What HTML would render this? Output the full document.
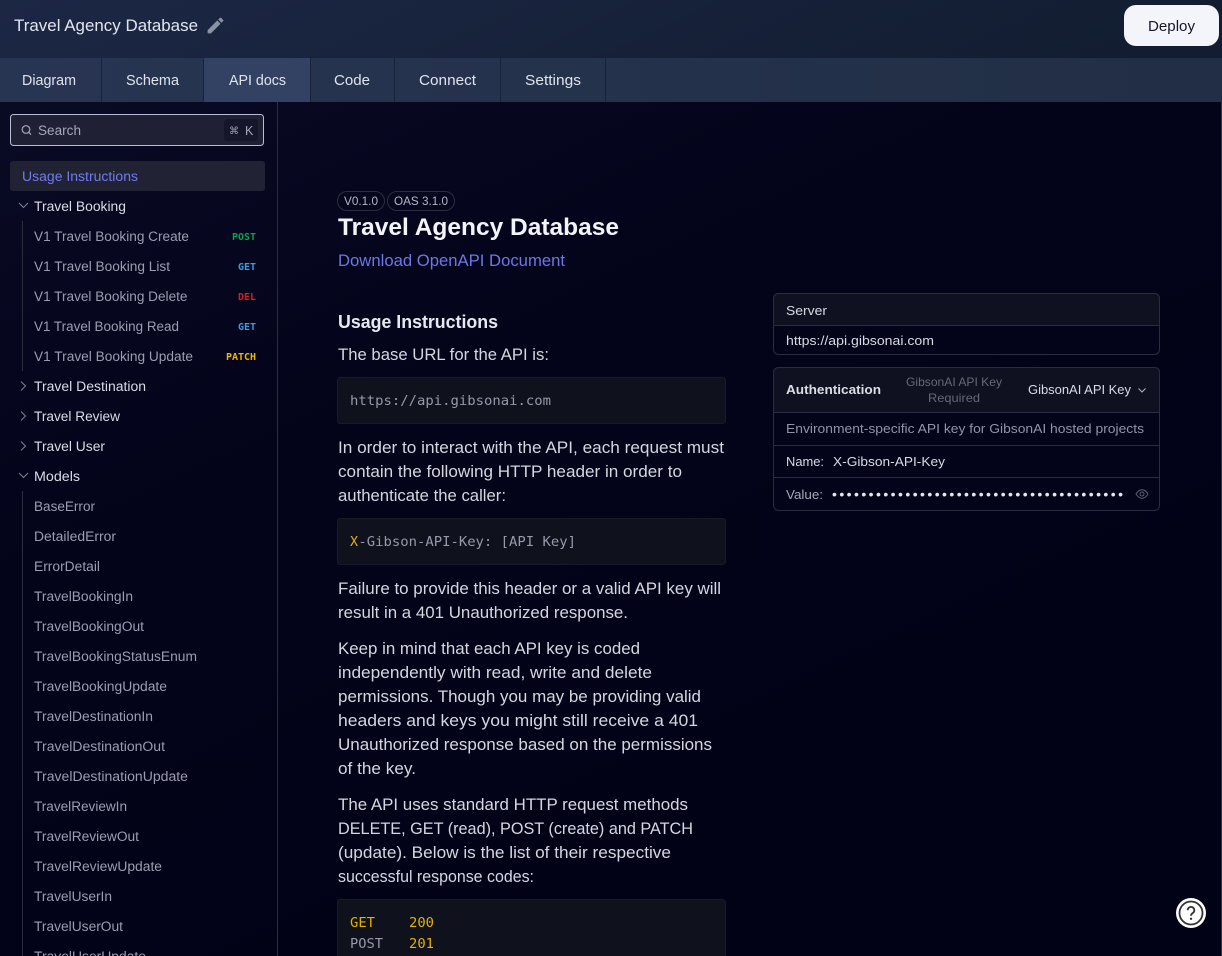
<!DOCTYPE html>
<html lang="en">
<head>
<meta charset="utf-8">
<title>Travel Agency Database</title>
<style>
html,body{margin:0;padding:0;width:1222px;height:956px;overflow:hidden;background:#03031a}
svg{display:block;position:absolute;left:0;top:0}
text{font-family:"Liberation Sans",sans-serif;white-space:pre}
.h{font-size:16.5px;fill:#e3e5ee}
.tab{font-size:14.5px;fill:#e0e3ec}
.s{font-size:13.4px;fill:#9b9eb0}
.g{font-size:13.4px;fill:#dadce6}
.b{font-family:"DejaVu Sans Mono",monospace;font-size:10px;font-weight:700}
.p{font-size:16.4px;fill:#d5d7e0}
.m{font-family:"DejaVu Sans Mono",monospace;font-size:13.4px;fill:#9699ab}
.y{fill:#e6b000}
.c{font-size:12.9px;fill:#d8dae3}
.d{font-size:12.9px;fill:#9294a6}
.pill{font-size:12.3px;fill:#b4b6c4}
</style>
</head>
<body>
<svg width="1222" height="956" viewBox="0 0 1222 956" xmlns="http://www.w3.org/2000/svg">
<defs>
<linearGradient id="hd" x1="0" x2="1" y1="0" y2="0.1"><stop offset="0" stop-color="#1c2745"/><stop offset="1" stop-color="#121d31"/></linearGradient>
<linearGradient id="tb" x1="0" x2="1" y1="0" y2="0"><stop offset="0" stop-color="#283552"/><stop offset="1" stop-color="#212e45"/></linearGradient>
<linearGradient id="bg" x1="0" x2="0.6" y1="0" y2="1"><stop offset="0" stop-color="#0b0c26"/><stop offset="0.45" stop-color="#03031a"/><stop offset="1" stop-color="#020216"/></linearGradient>
</defs>

<rect width="1222" height="956" fill="url(#bg)"/>
<rect width="1222" height="58" fill="url(#hd)"/>
<rect y="58" width="1222" height="44" fill="url(#tb)"/>
<rect x="204" y="58" width="106" height="44" fill="#334262"/>
<g fill="#1a2439">
<rect x="101" y="58" width="1" height="44"/><rect x="203" y="58" width="1" height="44"/><rect x="310" y="58" width="1" height="44"/><rect x="394" y="58" width="1" height="44"/><rect x="500" y="58" width="1" height="44"/><rect x="605" y="58" width="1" height="44"/>
</g>

<text class="h" x="14" y="31" textLength="184" lengthAdjust="spacingAndGlyphs">Travel Agency Database</text>
<svg x="205" y="15" width="21" height="21" viewBox="0 0 24 24"><path fill="#8a93a3" d="M3 17.250V21h3.750L17.810 9.940l-3.750-3.750L3 17.250z M20.710 7.040a1 1 0 0 0 0-1.410l-2.340-2.340a1 1 0 0 0-1.410 0l-1.830 1.830 3.750 3.750z"/></svg>

<rect x="1124" y="5" width="95" height="41" rx="12" fill="#f4f4fb"/>
<text x="1148" y="31" font-size="14.5" fill="#15172a" textLength="47" lengthAdjust="spacingAndGlyphs">Deploy</text>

<text class="tab" x="22" y="85" textLength="54" lengthAdjust="spacingAndGlyphs">Diagram</text>
<text class="tab" x="126" y="85" textLength="53" lengthAdjust="spacingAndGlyphs">Schema</text>
<text class="tab" x="229" y="85" textLength="57" lengthAdjust="spacingAndGlyphs">API docs</text>
<text class="tab" x="334" y="85" textLength="36" lengthAdjust="spacingAndGlyphs">Code</text>
<text class="tab" x="419" y="85" textLength="57" lengthAdjust="spacingAndGlyphs">Connect</text>
<text class="tab" x="525" y="85" textLength="56" lengthAdjust="spacingAndGlyphs">Settings</text>

<!-- sidebar -->
<rect x="277" y="102" width="1" height="854" fill="#2b2d3e"/>
<rect x="10.500" y="114.500" width="253" height="31" rx="3" fill="#1f2034" stroke="#b9bcd8"/>
<rect x="224" y="119" width="34" height="22" rx="3" fill="#15162a"/>
<circle cx="26" cy="129.500" r="3.800" fill="none" stroke="#a5a8ba" stroke-width="1.200"/>
<path d="M28.800 132.300L31 134.600" stroke="#a5a8ba" stroke-width="1.200" fill="none"/>
<text class="s" x="38" y="135" textLength="43" lengthAdjust="spacingAndGlyphs" style="fill:#a5a8ba">Search</text>
<text x="229" y="134" font-size="10" fill="#9b9eb0" style="font-family:'DejaVu Sans',sans-serif">⌘</text>
<text x="245" y="135" font-size="12.500" fill="#a5a8ba">K</text>

<rect x="10" y="161" width="255" height="30" rx="3" fill="#212234"/>
<text x="22" y="181" font-size="13.4" fill="#6f7cf0" textLength="116" lengthAdjust="spacingAndGlyphs">Usage Instructions</text>

<path d="M19 203l4.500 4.500 4.500-4.500" fill="none" stroke="#7f8294" stroke-width="1"/>
<path d="M21 381.500l4.500 4.500-4.500 4.500M21 411.500l4.500 4.500-4.500 4.500M21 441.500l4.500 4.500-4.500 4.500" fill="none" stroke="#7f8294" stroke-width="1"/>
<path d="M19 473l4.500 4.500 4.500-4.500" fill="none" stroke="#7f8294" stroke-width="1"/>
<rect x="22" y="221" width="1" height="150" fill="#2b2d3e"/>
<rect x="22" y="491" width="1" height="465" fill="#2b2d3e"/>

<text class="g" x="34" y="211" textLength="92" lengthAdjust="spacingAndGlyphs">Travel Booking</text>
<text class="s" x="34" y="241" textLength="155" lengthAdjust="spacingAndGlyphs">V1 Travel Booking Create</text>
<text class="s" x="34" y="271" textLength="136" lengthAdjust="spacingAndGlyphs">V1 Travel Booking List</text>
<text class="s" x="34" y="301" textLength="153.500" lengthAdjust="spacingAndGlyphs">V1 Travel Booking Delete</text>
<text class="s" x="34" y="331" textLength="145" lengthAdjust="spacingAndGlyphs">V1 Travel Booking Read</text>
<text class="s" x="34" y="361" textLength="159" lengthAdjust="spacingAndGlyphs">V1 Travel Booking Update</text>
<text class="b" x="232" y="240" fill="#0ba14f" textLength="24" lengthAdjust="spacingAndGlyphs">POST</text>
<text class="b" x="238" y="270" fill="#3d9ddb" textLength="18" lengthAdjust="spacingAndGlyphs">GET</text>
<text class="b" x="238" y="300" fill="#d91c1c" textLength="18" lengthAdjust="spacingAndGlyphs">DEL</text>
<text class="b" x="238" y="330" fill="#3d9ddb" textLength="18" lengthAdjust="spacingAndGlyphs">GET</text>
<text class="b" x="226" y="360" fill="#efb700" textLength="30" lengthAdjust="spacingAndGlyphs">PATCH</text>
<text class="g" x="34" y="391" textLength="112" lengthAdjust="spacingAndGlyphs">Travel Destination</text>
<text class="g" x="34" y="421" textLength="86" lengthAdjust="spacingAndGlyphs">Travel Review</text>
<text class="g" x="34" y="451" textLength="71" lengthAdjust="spacingAndGlyphs">Travel User</text>
<text class="g" x="34" y="481" textLength="46" lengthAdjust="spacingAndGlyphs">Models</text>
<text class="s" x="34" y="511" textLength="61" lengthAdjust="spacingAndGlyphs">BaseError</text>
<text class="s" x="34" y="541" textLength="82" lengthAdjust="spacingAndGlyphs">DetailedError</text>
<text class="s" x="34" y="571" textLength="66" lengthAdjust="spacingAndGlyphs">ErrorDetail</text>
<text class="s" x="34" y="601" textLength="99" lengthAdjust="spacingAndGlyphs">TravelBookingIn</text>
<text class="s" x="34" y="631" textLength="110" lengthAdjust="spacingAndGlyphs">TravelBookingOut</text>
<text class="s" x="34" y="661" textLength="163" lengthAdjust="spacingAndGlyphs">TravelBookingStatusEnum</text>
<text class="s" x="34" y="691" textLength="133" lengthAdjust="spacingAndGlyphs">TravelBookingUpdate</text>
<text class="s" x="34" y="721" textLength="119" lengthAdjust="spacingAndGlyphs">TravelDestinationIn</text>
<text class="s" x="34" y="751" textLength="131" lengthAdjust="spacingAndGlyphs">TravelDestinationOut</text>
<text class="s" x="34" y="781" textLength="154" lengthAdjust="spacingAndGlyphs">TravelDestinationUpdate</text>
<text class="s" x="34" y="811" textLength="93" lengthAdjust="spacingAndGlyphs">TravelReviewIn</text>
<text class="s" x="34" y="841" textLength="105" lengthAdjust="spacingAndGlyphs">TravelReviewOut</text>
<text class="s" x="34" y="871" textLength="128" lengthAdjust="spacingAndGlyphs">TravelReviewUpdate</text>
<text class="s" x="34" y="901" textLength="78" lengthAdjust="spacingAndGlyphs">TravelUserIn</text>
<text class="s" x="34" y="931" textLength="89" lengthAdjust="spacingAndGlyphs">TravelUserOut</text>
<text class="s" x="34" y="961" textLength="112" lengthAdjust="spacingAndGlyphs">TravelUserUpdate</text>

<!-- main -->
<rect x="337.500" y="191.500" width="47" height="19" rx="9.500" fill="none" stroke="#2c2e3e"/>
<rect x="387.500" y="191.500" width="67" height="19" rx="9.500" fill="none" stroke="#2c2e3e"/>
<text class="pill" x="344" y="205" textLength="34" lengthAdjust="spacingAndGlyphs">V0.1.0</text>
<text class="pill" x="394" y="205" textLength="54" lengthAdjust="spacingAndGlyphs">OAS 3.1.0</text>
<text x="338" y="235" font-size="24.500" font-weight="700" fill="#f3f4f8" textLength="281" lengthAdjust="spacingAndGlyphs">Travel Agency Database</text>
<text x="338" y="266" font-size="16.400" fill="#6b78e5" textLength="227" lengthAdjust="spacingAndGlyphs">Download OpenAPI Document</text>
<text x="338" y="328" font-size="18.400" font-weight="700" fill="#e8e9ef" textLength="160" lengthAdjust="spacingAndGlyphs">Usage Instructions</text>

<text class="p" x="338" y="360" textLength="211" lengthAdjust="spacingAndGlyphs">The base URL for the API is:</text>
<rect x="337.500" y="377.500" width="388" height="46" rx="3" fill="#0f111c" stroke="#191b29"/>
<text class="m" x="350" y="405" textLength="201" lengthAdjust="spacingAndGlyphs">https://api.gibsonai.com</text>

<text class="p" x="338" y="453" textLength="386" lengthAdjust="spacingAndGlyphs">In order to interact with the API, each request must</text>
<text class="p" x="338" y="477" textLength="344" lengthAdjust="spacingAndGlyphs">contain the following HTTP header in order to</text>
<text class="p" x="338" y="501" textLength="168" lengthAdjust="spacingAndGlyphs">authenticate the caller:</text>
<rect x="337.500" y="518.500" width="388" height="46" rx="3" fill="#0f111c" stroke="#191b29"/>
<text class="m y" x="350" y="546">X</text>
<text class="m" x="358.400" y="546" textLength="217.600" lengthAdjust="spacingAndGlyphs">-Gibson-API-Key: [API Key]</text>

<text class="p" x="338" y="594" textLength="383" lengthAdjust="spacingAndGlyphs">Failure to provide this header or a valid API key will</text>
<text class="p" x="338" y="618" textLength="290" lengthAdjust="spacingAndGlyphs">result in a 401 Unauthorized response.</text>

<text class="p" x="338" y="654" textLength="302" lengthAdjust="spacingAndGlyphs">Keep in mind that each API key is coded</text>
<text class="p" x="338" y="678" textLength="314" lengthAdjust="spacingAndGlyphs">independently with read, write and delete</text>
<text class="p" x="338" y="702" textLength="363" lengthAdjust="spacingAndGlyphs">permissions. Though you may be providing valid</text>
<text class="p" x="338" y="726" textLength="360" lengthAdjust="spacingAndGlyphs">headers and keys you might still receive a 401</text>
<text class="p" x="338" y="750" textLength="374" lengthAdjust="spacingAndGlyphs">Unauthorized response based on the permissions</text>
<text class="p" x="338" y="774" textLength="78" lengthAdjust="spacingAndGlyphs">of the key.</text>

<text class="p" x="338" y="810" textLength="350" lengthAdjust="spacingAndGlyphs">The API uses standard HTTP request methods</text>
<text class="p" x="338" y="834" textLength="355" lengthAdjust="spacingAndGlyphs">DELETE, GET (read), POST (create) and PATCH</text>
<text class="p" x="338" y="858" textLength="333" lengthAdjust="spacingAndGlyphs">(update). Below is the list of their respective</text>
<text class="p" x="338" y="882" textLength="196" lengthAdjust="spacingAndGlyphs">successful response codes:</text>

<rect x="337.500" y="899.500" width="388" height="70" rx="3" fill="#0f111c" stroke="#191b29"/>
<text class="m y" x="350" y="927" textLength="25" lengthAdjust="spacingAndGlyphs">GET</text>
<text class="m y" x="409" y="927" textLength="25" lengthAdjust="spacingAndGlyphs">200</text>
<text class="m" x="350" y="948" textLength="33" lengthAdjust="spacingAndGlyphs">POST</text>
<text class="m y" x="409" y="948" textLength="25" lengthAdjust="spacingAndGlyphs">201</text>

<!-- server card -->
<rect x="773.500" y="293.500" width="386" height="61" rx="5" fill="#03031a" stroke="#2b2d3e"/>
<path d="M773.500 325.500V298.500a5 5 0 0 1 5-5H1154.500a5 5 0 0 1 5 5V325.500z" fill="#0f1020" stroke="#2b2d3e"/>
<text class="c" x="786" y="315" textLength="41" lengthAdjust="spacingAndGlyphs">Server</text>
<text class="c" x="786" y="345" textLength="148" lengthAdjust="spacingAndGlyphs">https://api.gibsonai.com</text>

<!-- auth card -->
<rect x="773.500" y="367.500" width="386" height="143" rx="5" fill="#03031a" stroke="#2b2d3e"/>
<path d="M773.500 412.500V372.500a5 5 0 0 1 5-5H1154.500a5 5 0 0 1 5 5V412.500z" fill="#0f1020" stroke="#2b2d3e"/>
<rect x="774" y="445" width="385" height="1" fill="#2b2d3e"/>
<rect x="774" y="477" width="385" height="1" fill="#2b2d3e"/>
<text x="786" y="394" font-size="13.200" font-weight="700" fill="#dcdee6" textLength="95" lengthAdjust="spacingAndGlyphs">Authentication</text>
<text x="906" y="386" font-size="11.800" fill="#666878" textLength="96" lengthAdjust="spacingAndGlyphs">GibsonAI API Key</text>
<text x="928" y="402" font-size="11.800" fill="#666878" textLength="52" lengthAdjust="spacingAndGlyphs">Required</text>
<text class="c" x="1028" y="394" textLength="103" lengthAdjust="spacingAndGlyphs">GibsonAI API Key</text>
<path d="M1138.500 388.500l3.500 3.500 3.500-3.500" fill="none" stroke="#b4b6c4" stroke-width="1"/>
<text class="d" x="786" y="433" textLength="358" lengthAdjust="spacingAndGlyphs">Environment-specific API key for GibsonAI hosted projects</text>
<text class="c" x="786" y="466" textLength="38" lengthAdjust="spacingAndGlyphs">Name:</text>
<text class="c" x="833" y="466" textLength="112" lengthAdjust="spacingAndGlyphs">X-Gibson-API-Key</text>
<text class="c" x="786" y="499" textLength="37" lengthAdjust="spacingAndGlyphs" style="fill:#a5a7b6">Value:</text>
<text x="832" y="499" font-size="14" fill="#e6e7ee" textLength="291" lengthAdjust="spacing">••••••••••••••••••••••••••••••••••••••••</text>
<path d="M1136 494c2-3 4-4.300 6-4.300s4 1.300 6 4.300c-2 3-4 4.300-6 4.300s-4-1.300-6-4.300z" fill="none" stroke="#5f6172" stroke-width="1"/>
<circle cx="1142" cy="494" r="2" fill="none" stroke="#5f6172" stroke-width="1"/>

<!-- help -->
<circle cx="1191" cy="913" r="15" fill="#fff"/>
<circle cx="1191" cy="913" r="11.500" fill="none" stroke="#333" stroke-width="1.800"/>
<path d="M1187.700 910.200a3.300 3.300 0 1 1 5.100 2.800c-1.200.8-1.800 1.400-1.800 2.800" fill="none" stroke="#333" stroke-width="1.800"/>
<circle cx="1191" cy="918.800" r="1.200" fill="#333"/>

<rect x="1221" y="102" width="1" height="854" fill="#333540"/>
</svg>
</body>
</html>
